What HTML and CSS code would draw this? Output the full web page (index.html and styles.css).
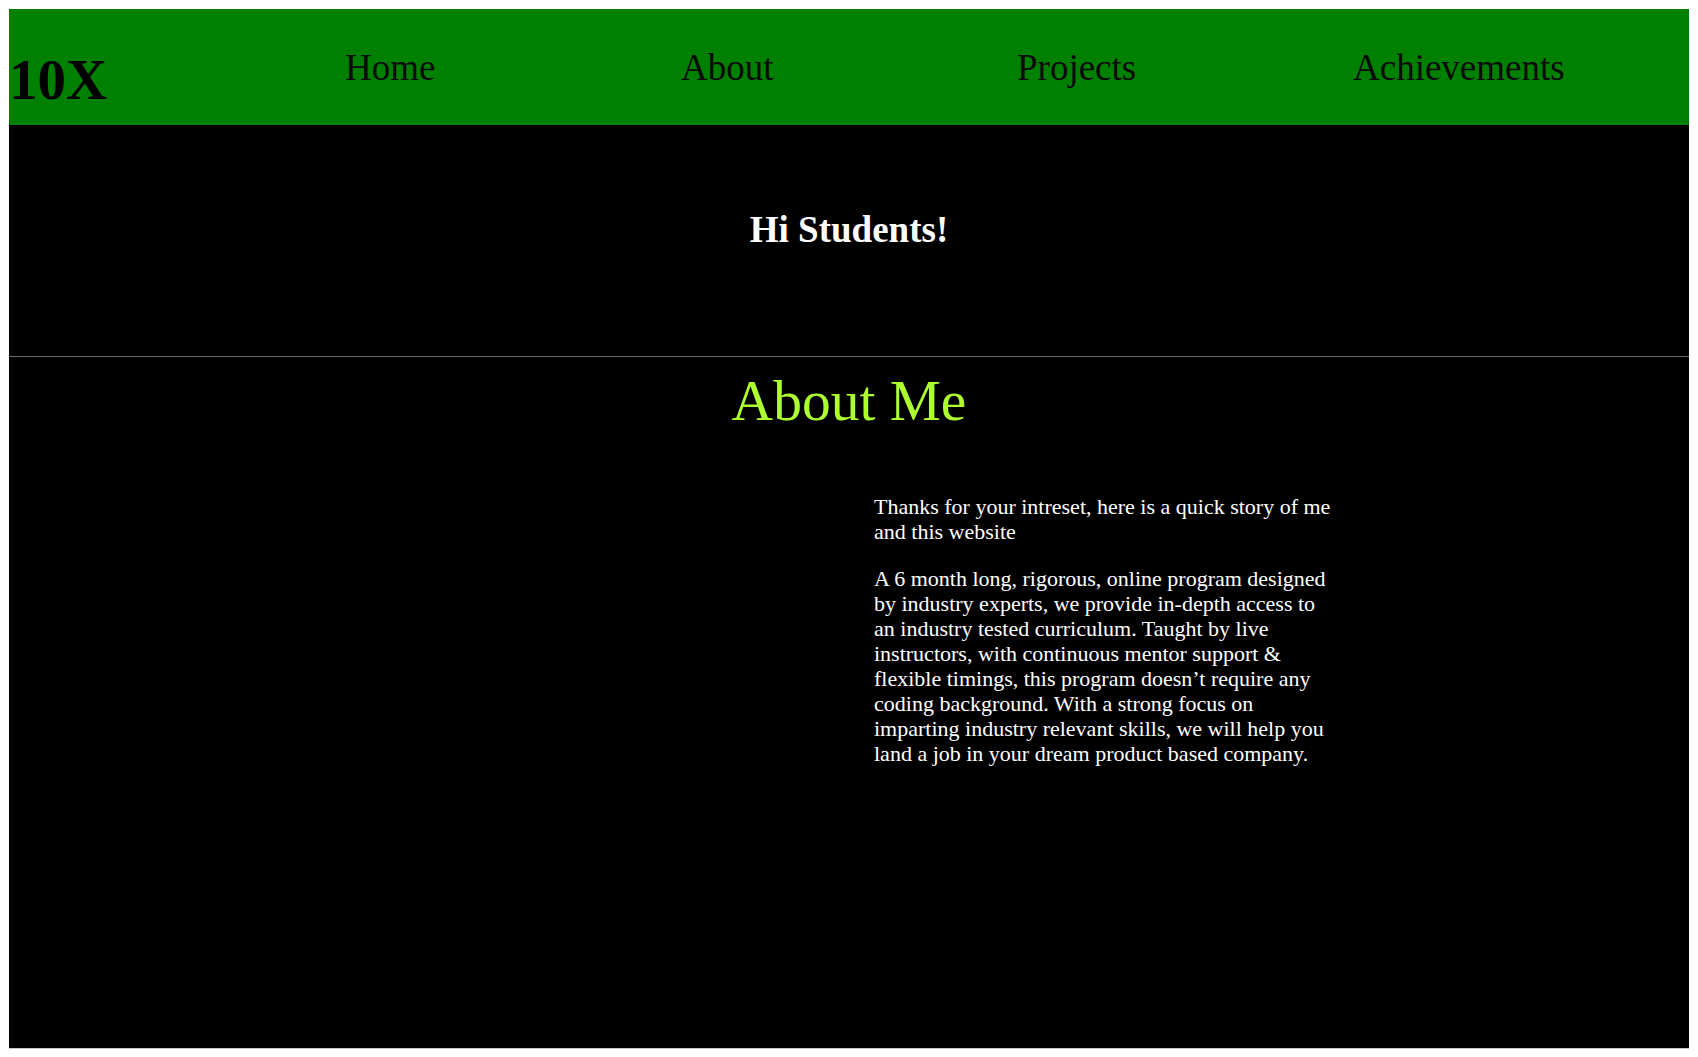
FILE: index.html
```html
<!DOCTYPE html>
<html lang="en">
<head>
<meta charset="utf-8">
<title>10X</title>
<link rel="stylesheet" href="styles.css">
</head>
<body>
<header class="topbar">
  <div class="logo">10X</div>
  <a class="nav-link" href="#">Home</a>
  <a class="nav-link" href="#">About</a>
  <a class="nav-link" href="#">Projects</a>
  <a class="nav-link" href="#">Achievements</a>
</header>
<section class="hero">
  <h1 class="hero-title">Hi Students!</h1>
</section>
<section class="about">
  <h2 class="about-title">About Me</h2>
  <div class="about-grid">
    <div class="about-media"></div>
    <div class="about-text">
      <p>Thanks for your intreset, here is a quick story of me and this website</p>
      <p>A 6 month long, rigorous, online program designed by industry experts, we provide in-depth access to an industry tested curriculum. Taught by live instructors, with continuous mentor support &amp; flexible timings, this program doesn’t require any coding background. With a strong focus on imparting industry relevant skills, we will help you land a job in your dream product based company.</p>
    </div>
  </div>
</section>
</body>
</html>
```
FILE: styles.css
```css
html, body {
  background: #ffffff;
}
body {
  margin: 9px 9px 8px 9px;
  font-family: "Liberation Serif", "Times New Roman", serif;
}
.topbar {
  display: grid;
  grid-template-columns: repeat(5, 1fr);
  align-items: start;
  height: 116px;
  box-sizing: border-box;
  padding-top: 37px;
  background: #008000;
}
.logo {
  font-size: 57px;
  font-weight: bold;
  color: #000;
  line-height: normal;
  margin-top: 1px;
}
.nav-link {
  font-size: 37px;
  color: #0a0a0a;
  text-decoration: none;
  line-height: normal;
}
.hero {
  background: #000;
  height: 232px;
  box-sizing: border-box;
  padding-top: 83px;
  border-bottom: 1px solid #6b6b6b;
  text-align: center;
}
.hero-title {
  margin: 0;
  font-size: 37px;
  font-weight: bold;
  color: #fff;
  line-height: normal;
}
.about {
  background: #000;
  height: 692px;
  box-sizing: border-box;
  padding-top: 11px;
  border-bottom: 1px solid #c8c8c8;
}
.about-title {
  margin: 0;
  text-align: center;
  font-size: 57.5px;
  font-weight: normal;
  color: #adff2f;
  line-height: normal;
}
.about-grid {
  display: grid;
  grid-template-columns: 1fr 1fr;
  padding-top: 39px;
}
.about-text {
  padding-left: 25px;
  width: 465px;
  color: #fff;
  font-size: 22px;
  line-height: 25px;
}
.about-text p {
  margin: 22px 0;
}
```
